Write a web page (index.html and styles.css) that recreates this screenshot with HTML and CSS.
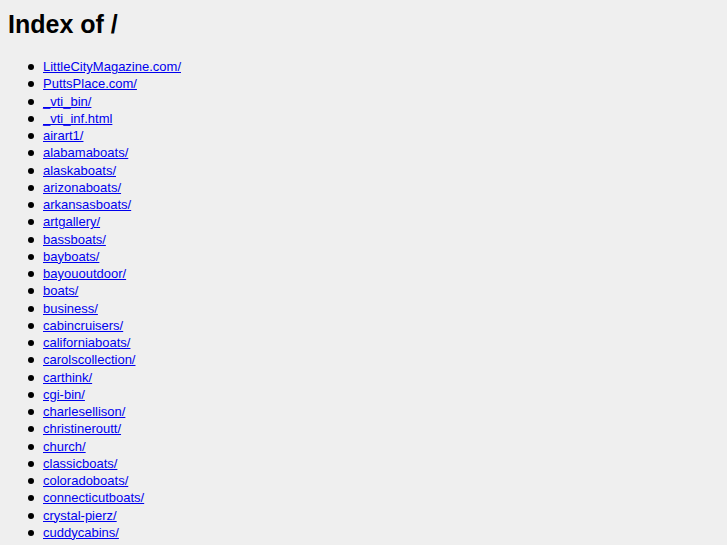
FILE: index.html
```
<!DOCTYPE html>
<html>
<head>
<meta charset="utf-8">
<title>Index of /</title>
<link rel="stylesheet" href="styles.css">
</head>
<body>
<h1 class="title">Index of /</h1>
<ul class="listing">
<li><a href="#">LittleCityMagazine.com/</a></li>
<li><a href="#">PuttsPlace.com/</a></li>
<li><a href="#">_vti_bin/</a></li>
<li><a href="#">_vti_inf.html</a></li>
<li><a href="#">airart1/</a></li>
<li><a href="#">alabamaboats/</a></li>
<li><a href="#">alaskaboats/</a></li>
<li><a href="#">arizonaboats/</a></li>
<li><a href="#">arkansasboats/</a></li>
<li><a href="#">artgallery/</a></li>
<li><a href="#">bassboats/</a></li>
<li><a href="#">bayboats/</a></li>
<li><a href="#">bayououtdoor/</a></li>
<li><a href="#">boats/</a></li>
<li><a href="#">business/</a></li>
<li><a href="#">cabincruisers/</a></li>
<li><a href="#">californiaboats/</a></li>
<li><a href="#">carolscollection/</a></li>
<li><a href="#">carthink/</a></li>
<li><a href="#">cgi-bin/</a></li>
<li><a href="#">charlesellison/</a></li>
<li><a href="#">christineroutt/</a></li>
<li><a href="#">church/</a></li>
<li><a href="#">classicboats/</a></li>
<li><a href="#">coloradoboats/</a></li>
<li><a href="#">connecticutboats/</a></li>
<li><a href="#">crystal-pierz/</a></li>
<li><a href="#">cuddycabins/</a></li>
</ul>
</body>
</html>
```
FILE: styles.css
```
html {
  background: #efefef;
}
body {
  margin: 9px 8px 8px;
  font-family: "Liberation Sans", Arial, sans-serif;
  font-size: 13px;
  color: #000;
}
.title {
  margin: 0 0 19px;
  font-size: 25px;
  line-height: 30px;
  font-weight: bold;
}
.listing {
  margin: 0;
  padding-left: 35px;
  line-height: 17.25px;
  list-style: none;
}
.listing li::before {
  content: "";
  display: inline-block;
  width: 6px;
  height: 6px;
  border-radius: 50%;
  background: #000;
  margin-left: -15px;
  margin-right: 9px;
  vertical-align: 1px;
}
.listing a {
  color: #0000ee;
}
```
